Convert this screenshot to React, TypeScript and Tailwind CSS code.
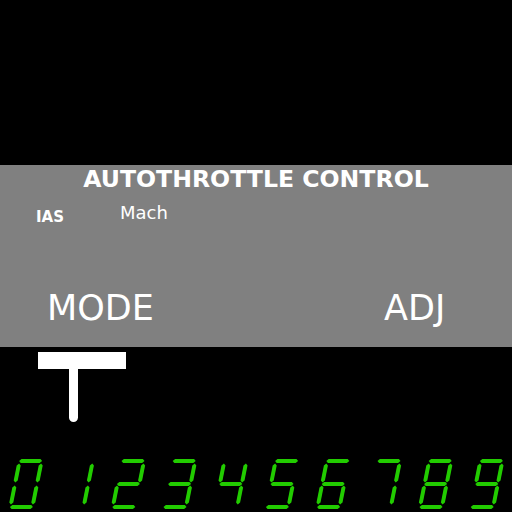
import React from 'react';

// seven-segment geometry (unskewed units, then slanted by K per px of height)
const K = 0.2;
const H = 50;
const T = 4;
const PITCH = 51.2;
const LEFT = 8;

type Pt = [number, number];

const horiz = (x1: number, x2: number, c: number): Pt[] => [
    [x1, c], [x1 + T / 2, c - T / 2], [x2 - T / 2, c - T / 2],
    [x2, c], [x2 - T / 2, c + T / 2], [x1 + T / 2, c + T / 2],
];

const vert = (cx: number, y1: number, y2: number): Pt[] => [
    [cx, y1], [cx + T / 2, y1 + T / 2], [cx + T / 2, y2 - T / 2],
    [cx, y2], [cx - T / 2, y2 - T / 2], [cx - T / 2, y1 + T / 2],
];

const SEGMENTS: Record<string, Pt[]> = {
    a: horiz(1.5, 24.5, 2),
    g: horiz(1.5, 24.5, 25),
    d: horiz(1.5, 24.5, 48),
    f: vert(2, 4.5, 23.5),
    e: vert(2, 26.5, 45.5),
    b: vert(24, 4.5, 23.5),
    c: vert(24, 26.5, 45.5),
};

const DIGITS = ['abcdef', 'bc', 'abged', 'abgcd', 'fgbc', 'afgcd', 'afgedc', 'abc', 'abcdefg', 'abcdfg'];

const toPoints = (pts: Pt[], ox: number) =>
    pts.map(([x, y]) => `${(ox + x + (H - y) * K).toFixed(2)},${y}`).join(' ');

const SegmentRow = () => (
    <svg width={512} height={H} viewBox={`0 0 512 ${H}`} className="block" role="img" aria-label="0123456789">
        {DIGITS.map((segs, i) =>
            segs.split('').map(s => (
                <polygon key={`${i}-${s}`} points={toPoints(SEGMENTS[s], LEFT + i * PITCH)} fill="#22cc00" />
            ))
        )}
    </svg>
);

export default function App() {
    return (
        <div className="w-[512px] h-[512px] bg-black overflow-hidden font-['DejaVu_Sans',sans-serif] text-white">
            <div className="h-[165px]" />

            <div className="h-[182px] bg-[#808080] flex flex-col">
                <div className="pt-[2px] text-center font-bold text-[23.6px] leading-[24px]">AUTOTHROTTLE CONTROL</div>

                <div className="flex items-start mt-[12px]">
                    <span className="ml-[36px] mt-[6px] font-bold text-[15px] leading-[16px]">IAS</span>
                    <span className="ml-[56px] text-[18px] leading-[20px]">Mach</span>
                </div>

                <div className="flex mt-auto pb-[19px] text-[35px] leading-[40px]">
                    <span className="ml-[47px] w-[337px]">MODE</span>
                    <span>ADJ</span>
                </div>
            </div>

            {/* switch lever */}
            <div className="mt-[5px] ml-[38px] w-[88px] h-[17px] bg-white" />
            <div className="ml-[69px] w-[9px] h-[53px] bg-white rounded-b-full" />

            <div className="mt-[37px]">
                <SegmentRow />
            </div>
        </div>
    );
}
